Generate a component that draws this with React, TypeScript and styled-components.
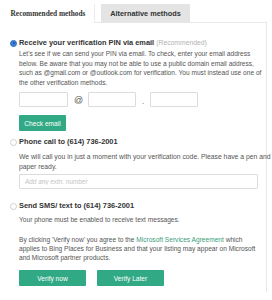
import React from "react";
import styled, { createGlobalStyle } from "styled-components";

const Global = createGlobalStyle`
  html, body { margin: 0; padding: 0; background: #fff; }
  body { font-family: "Liberation Sans", Arial, sans-serif; color: #555; }
  * { box-sizing: border-box; }
`;

const Page = styled.div`
  width: 272px;
  height: 300px;
  padding: 4px 6px 0 2px;
  overflow: hidden;
`;

const TabBar = styled.div`
  display: flex;
  align-items: flex-end;
  gap: 6px;
  height: 18px;
  position: relative;
  z-index: 1;
`;

const Tab = styled.div<{ $active?: boolean }>`
  height: ${(p) => (p.$active ? "19px" : "18px")};
  margin-bottom: ${(p) => (p.$active ? "-1px" : "0")};
  width: ${(p) => (p.$active ? "93px" : "89px")};
  display: flex;
  align-items: center;
  justify-content: center;
  padding-bottom: ${(p) => (p.$active ? "1px" : "0")};
  font-size: 7.35px;
  font-weight: bold;
  white-space: nowrap;
  background: ${(p) => (p.$active ? "#fff" : "#e4e4e4")};
  color: #333;
  font-family: ${(p) =>
    p.$active ? '"Liberation Serif", "Times New Roman", serif' : '"Liberation Sans", Arial, sans-serif'};
  border-right: ${(p) => (p.$active ? "1px solid #ececec" : "none")};
`;

const Panel = styled.div`
  border-top: 1px solid #e8e8e8;
  border-right: 1px solid #e8e8e8;
  width: 265px;
  height: 270px;
  padding: 14px 0 0 8px;
`;

const OptionHead = styled.div<{ $mt?: number }>`
  display: flex;
  align-items: center;
  gap: 2px;
  height: 10px;
  margin-top: ${(p) => p.$mt ?? 0}px;
`;

const Radio = styled.span<{ $checked?: boolean }>`
  width: 7px;
  height: 7px;
  border-radius: 50%;
  flex: none;
  margin-top: 2px;
  background: ${(p) => (p.$checked ? "#3d82d6" : "#fff")};
  border: 1px solid ${(p) => (p.$checked ? "#2f6fc0" : "#cfcfcf")};
  display: flex;
  align-items: center;
  justify-content: center;
  &::after {
    content: "";
    width: 2px;
    height: 2px;
    border-radius: 50%;
    background: ${(p) => (p.$checked ? "#1f4f9a" : "transparent")};
  }
`;

const Title = styled.div`
  font-size: 7.4px;
  font-weight: bold;
  color: #333;
  white-space: nowrap;
`;

const Muted = styled.span`
  font-weight: normal;
  color: #b3b3b3;
  font-size: 6.8px;
`;

const Body = styled.div`
  margin-left: 9px;
`;

const Text = styled.p<{ $mt?: number; $lh?: number; $size?: number }>`
  margin: ${(p) => p.$mt ?? 0}px 0 0 0;
  font-size: ${(p) => p.$size ?? 6.6}px;
  line-height: ${(p) => p.$lh ?? 9.6}px;
  color: #555;
  white-space: nowrap;
`;

const Link = styled.a`
  color: #3a9d7c;
  text-decoration: none;
`;

const EmailRow = styled.div`
  display: flex;
  align-items: center;
  gap: 6px;
  margin-top: 5px;
  height: 15px;
`;

const Field = styled.input<{ $w: number; $mt?: number }>`
  display: block;
  width: ${(p) => p.$w}px;
  height: 15px;
  margin-top: ${(p) => p.$mt ?? 0}px;
  border: 1px solid #dcdcdc;
  border-radius: 1px;
  padding: 0 5px;
  font-family: "Liberation Sans", Arial, sans-serif;
  font-size: 6.4px;
  outline: none;
  background: #fff;
  &::placeholder {
    color: #c4c4c4;
    font-style: italic;
  }
`;

const Sep = styled.span<{ $w: number; $size: number; $dy: number }>`
  width: ${(p) => p.$w}px;
  font-size: ${(p) => p.$size}px;
  color: #555;
  line-height: 1;
  text-align: center;
  position: relative;
  top: ${(p) => p.$dy}px;
`;

const Button = styled.button<{ $w: number; $mt?: number }>`
  display: block;
  width: ${(p) => p.$w}px;
  height: 16px;
  margin-top: ${(p) => p.$mt ?? 0}px;
  background: #31a985;
  border: none;
  border-radius: 1px;
  color: #fff;
  font-family: "Liberation Sans", Arial, sans-serif;
  font-size: 6.6px;
  padding: 0;
  cursor: pointer;
`;

const ButtonRow = styled.div`
  display: flex;
  gap: 11px;
  margin-top: 8px;
`;

export default function App() {
  return (
    <Page>
      <Global />
      <TabBar>
        <Tab $active>Recommended methods</Tab>
        <Tab>Alternative methods</Tab>
      </TabBar>
      <Panel>
        <OptionHead>
          <Radio $checked />
          <Title>
            Receive your verification PIN via email <Muted>(Recommended)</Muted>
          </Title>
        </OptionHead>
        <Body>
          <Text $mt={2}>
            Let's see if we can send your PIN via email. To check, enter your email address
            <br />
            below. Be aware that you may not be able to use a public domain email address,
            <br />
            such as @gmail.com or @outlook.com for verification. You must instead use one of
            <br />
            the other verification methods.
          </Text>
          <EmailRow>
            <Field $w={49} />
            <Sep $w={8} $size={9} $dy={1}>@</Sep>
            <Field $w={48} />
            <Sep $w={2} $size={8} $dy={2}>.</Sep>
            <Field $w={48} />
          </EmailRow>
          <Button $w={47} $mt={8}>Check email</Button>
        </Body>

        <OptionHead $mt={5}>
          <Radio />
          <Title>Phone call to (614) 736-2001</Title>
        </OptionHead>
        <Body>
          <Text $mt={6} $size={6.8}>
            We will call you in just a moment with your verification code. Please have a pen and
            <br />
            paper ready.
          </Text>
          <Field $w={239} $mt={2} placeholder="Add any extn. number" />
        </Body>

        <OptionHead $mt={12}>
          <Radio />
          <Title>Send SMS/ text to (614) 736-2001</Title>
        </OptionHead>
        <Body>
          <Text $mt={4}>Your phone must be enabled to receive text messages.</Text>
          <Text $mt={11} $lh={9}>
            By clicking 'Verify now' you agree to the <Link href="#">Microsoft Services Agreement</Link> which
            <br />
            applies to Bing Places for Business and that your listing may appear on Microsoft
            <br />
            and Microsoft partner products.
          </Text>
          <ButtonRow>
            <Button $w={67}>Verify now</Button>
            <Button $w={67}>Verify Later</Button>
          </ButtonRow>
        </Body>
      </Panel>
    </Page>
  );
}
